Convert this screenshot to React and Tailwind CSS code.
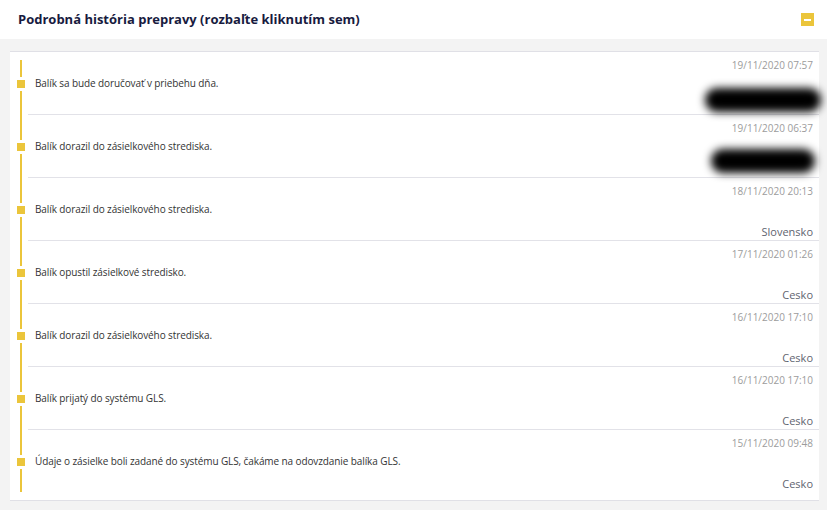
import React from 'react';

const events = [
  { date: '19/11/2020 07:57', text: 'Balík sa bude doručovať v priebehu dňa.', place: null, blob: 'w-[116px] h-[24px] -mr-[8px] -mt-[2px]' },
  { date: '19/11/2020 06:37', text: 'Balík dorazil do zásielkového strediska.', place: null, blob: 'w-[104px] h-[24px] -mr-[2px] -mt-[4px]' },
  { date: '18/11/2020 20:13', text: 'Balík dorazil do zásielkového strediska.', place: 'Slovensko' },
  { date: '17/11/2020 01:26', text: 'Balík opustil zásielkové stredisko.', place: 'Cesko' },
  { date: '16/11/2020 17:10', text: 'Balík dorazil do zásielkového strediska.', place: 'Cesko' },
  { date: '16/11/2020 17:10', text: 'Balík prijatý do systému GLS.', place: 'Cesko' },
  { date: '15/11/2020 09:48', text: 'Údaje o zásielke boli zadané do systému GLS, čakáme na odovzdanie balíka GLS.', place: 'Cesko' },
];

function TimelineRow({ item, first, last }) {
  return (
    <div className={`flex ${last ? 'h-[70px]' : 'h-[63px]'}`}>
      <div className="w-[18px] shrink-0 pl-[7px] flex flex-col">
        <div className={`ml-[3px] w-[2px] bg-[#ebc53b] ${first ? 'mt-[8px] h-[17px]' : 'h-[25px]'}`}></div>
        <div className="w-[8px] h-[8px] my-[3px] bg-[#ebc53b]"></div>
        <div className={`ml-[3px] w-[2px] bg-[#ebc53b] flex-1 ${last ? 'mb-[8px]' : ''}`}></div>
      </div>
      <div className={`flex-1 pl-[7px] pr-[6px] pt-[6px] ${last ? '' : 'border-b border-[#e2e2e8]'}`}>
        <div className="text-right text-[10px] leading-[14px] text-[#9c9c9c]">{item.date}</div>
        <div className="mt-[4px] text-[10px] leading-[14px] tracking-[-0.1px] text-[#333]">{item.text}</div>
        {item.place ? (
          <div className="mt-[9px] text-right text-[11px] leading-[14px] text-[#5f6470]">{item.place}</div>
        ) : (
          <div className="flex justify-end">
            <div className={`${item.blob} rounded-full bg-black blur-[4px]`}></div>
          </div>
        )}
      </div>
    </div>
  );
}

export default function App() {
  return (
    <div className="min-h-screen bg-[#f3f3f3] font-['Open_Sans',sans-serif]">
      <div className="h-[39px] bg-white flex items-center justify-between pl-[18px] pr-[13px]">
        <h2 className="text-[13px] font-bold text-[#181b40]">
          Podrobná história prepravy (rozbaľte kliknutím sem)
        </h2>
        <button className="w-[13px] h-[13px] bg-[#ebc53b] flex items-center justify-center">
          <span className="block w-[7px] h-[2px] bg-white"></span>
        </button>
      </div>
      <div className="px-[8px] pt-[12px] pb-[10px]">
        <div className="bg-white border-t border-b border-[#e0e0e6] ml-[2px] w-[809px]">
          {events.map((item, i) => (
            <TimelineRow key={i} item={item} first={i === 0} last={i === events.length - 1} />
          ))}
        </div>
      </div>
    </div>
  );
}
